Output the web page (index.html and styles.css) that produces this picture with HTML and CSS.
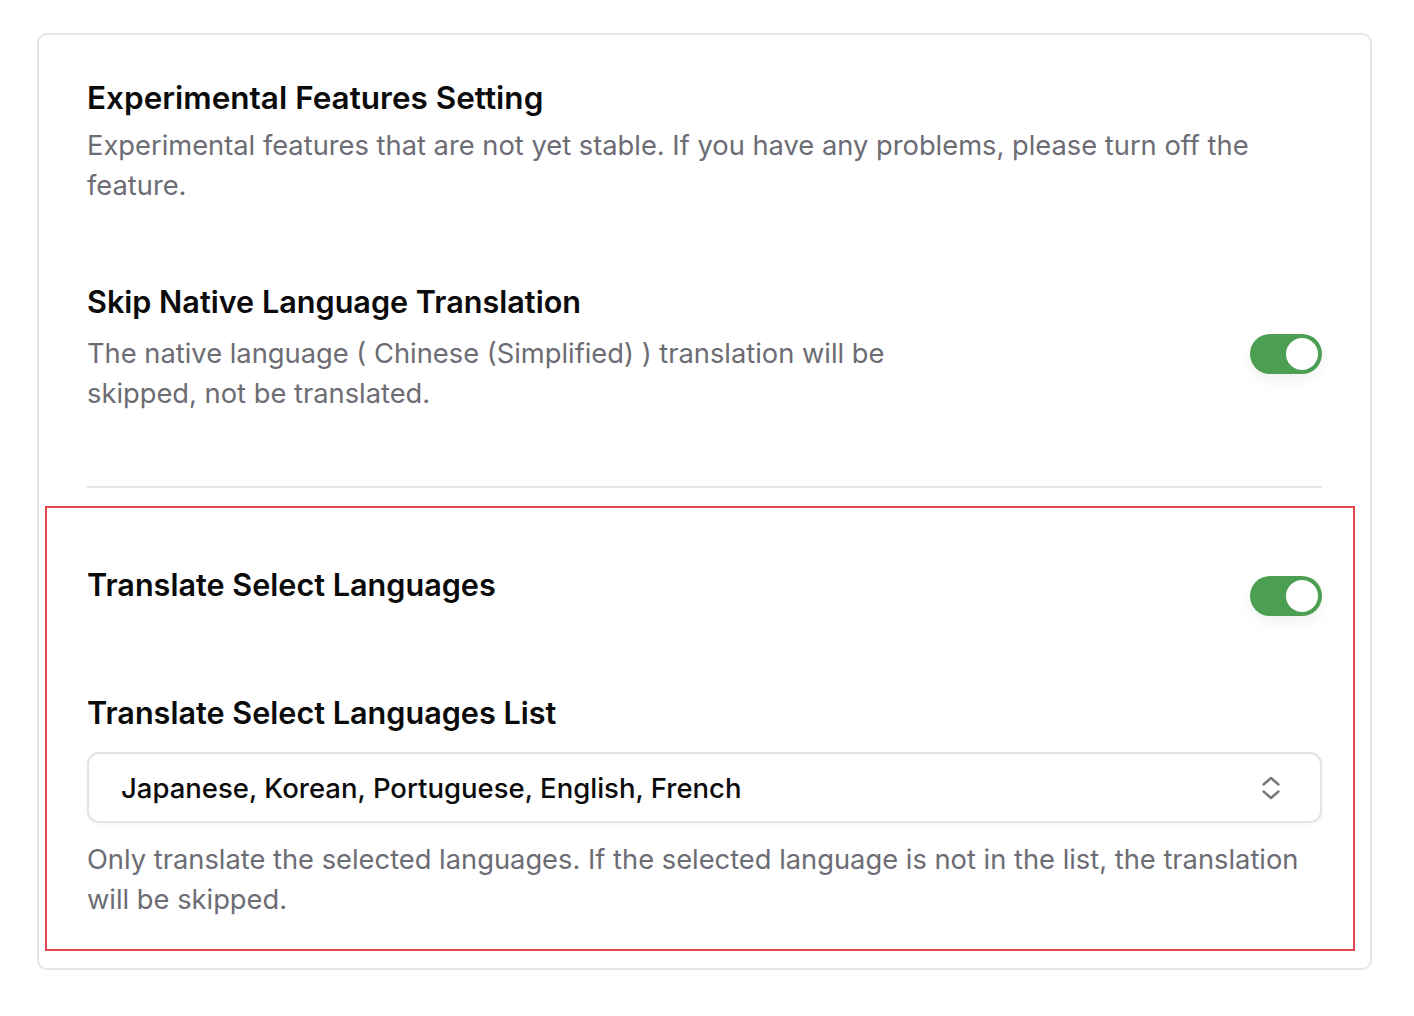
FILE: index.html
```html
<!DOCTYPE html>
<html lang="en">
<head>
<meta charset="utf-8">
<title>Experimental Features Setting</title>
<link rel="stylesheet" href="styles.css">
</head>
<body>
<div class="card">
  <section class="intro">
    <h2 class="title main-title">Experimental Features Setting</h2>
    <p class="desc">Experimental features that are not yet stable. If you have any problems, please turn off the feature.</p>
  </section>

  <section class="row skip">
    <div class="text">
      <h3 class="title">Skip Native Language Translation</h3>
      <p class="desc">The native language ( Chinese (Simplified) ) translation will be skipped, not be translated.</p>
    </div>
    <span class="toggle toggle-skip"><span class="knob"></span></span>
  </section>

  <hr class="divider">

  <section class="select-section">
    <div class="highlight"></div>
    <div class="row select-row">
      <h3 class="title">Translate Select Languages</h3>
      <span class="toggle toggle-select"><span class="knob"></span></span>
    </div>
    <h3 class="title list-title">Translate Select Languages List</h3>
    <div class="select">
      <span class="select-value">Japanese, Korean, Portuguese, English, French</span>
      <svg class="chevrons" width="18" height="24" viewBox="0 0 18 24" fill="none" stroke="#787878" stroke-width="2.4" stroke-linecap="round" stroke-linejoin="round">
        <path d="M1.5 8.5 L9 2 L16.5 8.5"/>
        <path d="M1.5 15.5 L9 22 L16.5 15.5"/>
      </svg>
    </div>
    <p class="desc help">Only translate the selected languages. If the selected language is not in the list, the translation will be skipped.</p>
  </section>
</div>
</body>
</html>
```

FILE: styles.css
```css
* { box-sizing: border-box; }

html, body {
  margin: 0;
  padding: 0;
  background: #ffffff;
}

body {
  font-family: Inter, "Noto Sans", "Liberation Sans", sans-serif;
  color: #0b0b0c;
}

.card {
  margin: 33px 42px 40px 37px;
  border: 2px solid #e6e6e6;
  border-radius: 10px;
  padding: 43px 48px 17px 48px;
}

.title {
  margin: 0;
  font-size: 30.6px;
  line-height: 40px;
  font-weight: 600;
  color: #0b0b0c;
}

.main-title {
  font-size: 31.5px;
}

.desc {
  margin: 0;
  font-size: 27.3px;
  line-height: 40px;
  font-weight: 400;
  color: #6c6c74;
}

.intro .desc {
  margin-top: 8px;
}

.row {
  display: flex;
  justify-content: space-between;
  align-items: flex-start;
}

.skip {
  margin-top: 76px;
}

.skip .text {
  width: 850px;
}

.skip .desc {
  margin-top: 12px;
}

.toggle {
  flex: none;
  width: 72px;
  height: 40px;
  border-radius: 20px;
  background: #4c9f52;
  position: relative;
  box-shadow: 0 6px 14px rgba(0, 0, 0, 0.06);
}

.knob {
  position: absolute;
  right: 4px;
  top: 4px;
  width: 32px;
  height: 32px;
  border-radius: 50%;
  background: #ffffff;
}

.toggle-skip {
  margin-top: 52px;
}

.divider {
  margin: 72px 0 0 0;
  border: 0;
  height: 2px;
  background: #e6e6e6;
}

.select-section {
  position: relative;
  margin-top: 18px;
  padding: 59px 0 31px 0;
}

.highlight {
  position: absolute;
  top: 0;
  bottom: 0;
  left: -42px;
  right: -33px;
  border: 2px solid #e5484d;
  pointer-events: none;
}

.toggle-select {
  margin-top: 11px;
}

.list-title {
  margin-top: 77px;
}

.select {
  margin-top: 19px;
  height: 71px;
  border: 2px solid #e4e4e4;
  border-radius: 12px;
  display: flex;
  align-items: center;
  justify-content: space-between;
  padding: 0 40px 0 32px;
  box-shadow: 0 2px 4px rgba(0, 0, 0, 0.04);
}

.select-value {
  font-size: 27.5px;
  font-weight: 500;
  color: #0b0b0c;
}

.chevrons {
  display: block;
}

.help {
  margin-top: 17px;
}
```
